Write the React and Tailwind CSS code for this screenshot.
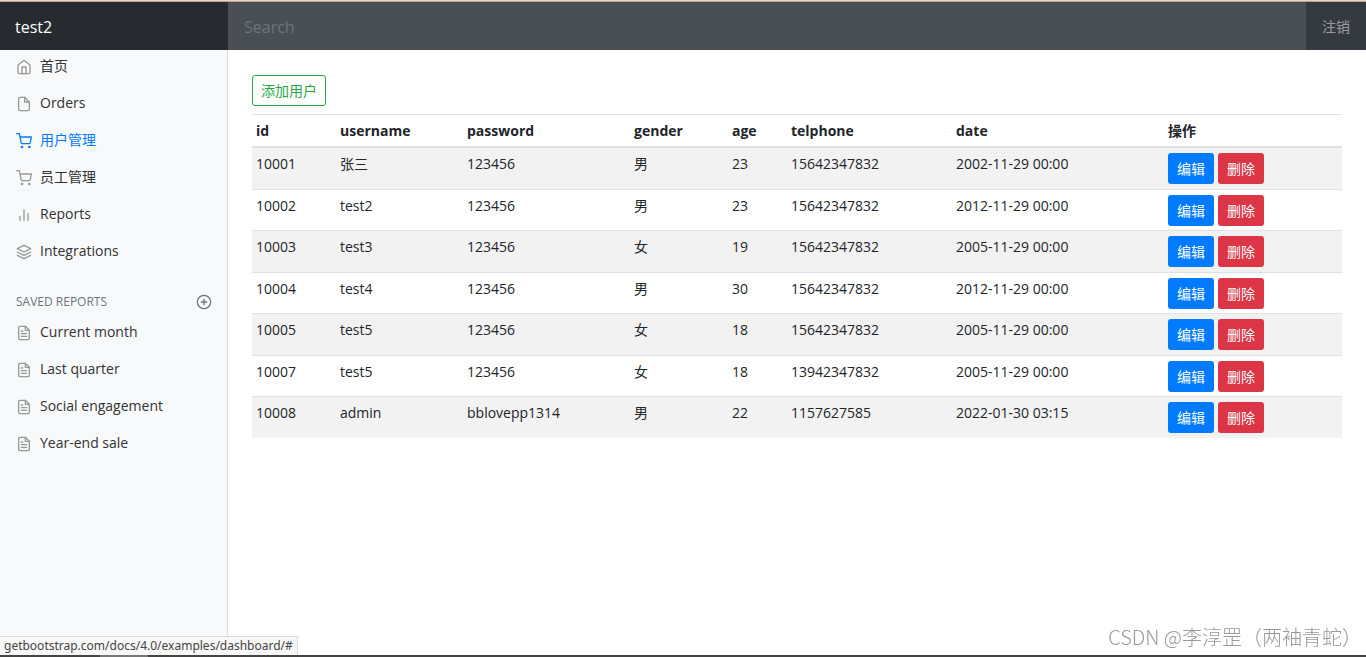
import { FiHome, FiFile, FiShoppingCart, FiBarChart2, FiLayers, FiFileText, FiPlusCircle } from 'react-icons/fi';
import clsx from 'clsx';

const navItems = [
    { label: '首页', icon: FiHome },
    { label: 'Orders', icon: FiFile },
    { label: '用户管理', icon: FiShoppingCart, active: true },
    { label: '员工管理', icon: FiShoppingCart },
    { label: 'Reports', icon: FiBarChart2 },
    { label: 'Integrations', icon: FiLayers }
];

const savedReports = ['Current month', 'Last quarter', 'Social engagement', 'Year-end sale'];

const columns = [
    { label: 'id', width: 'w-[84px]' },
    { label: 'username', width: 'w-[127px]' },
    { label: 'password', width: 'w-[167px]' },
    { label: 'gender', width: 'w-[98px]' },
    { label: 'age', width: 'w-[59px]' },
    { label: 'telphone', width: 'w-[165px]' },
    { label: 'date', width: 'w-[212px]' },
    { label: '操作', width: 'w-[178px]' }
];

const users = [
    { id: 10001, username: '张三', password: '123456', gender: '男', age: 23, telphone: '15642347832', date: '2002-11-29 00:00' },
    { id: 10002, username: 'test2', password: '123456', gender: '男', age: 23, telphone: '15642347832', date: '2012-11-29 00:00' },
    { id: 10003, username: 'test3', password: '123456', gender: '女', age: 19, telphone: '15642347832', date: '2005-11-29 00:00' },
    { id: 10004, username: 'test4', password: '123456', gender: '男', age: 30, telphone: '15642347832', date: '2012-11-29 00:00' },
    { id: 10005, username: 'test5', password: '123456', gender: '女', age: 18, telphone: '15642347832', date: '2005-11-29 00:00' },
    { id: 10007, username: 'test5', password: '123456', gender: '女', age: 18, telphone: '13942347832', date: '2005-11-29 00:00' },
    { id: 10008, username: 'admin', password: 'bblovepp1314', gender: '男', age: 22, telphone: '1157627585', date: '2022-01-30 03:15' }
];

function NavLink({ label, icon: Icon, active }) {
    return (
        <li>
            <a
                href="#"
                className={clsx(
                    'flex items-center gap-2 px-4 py-2 leading-[21px]',
                    active ? 'text-[#007bff]' : 'text-[#333]'
                )}
            >
                <Icon className={clsx('mt-0.5 size-4 shrink-0', !active && 'text-[#999]')} />
                {label}
            </a>
        </li>
    );
}

function Header() {
    return (
        <header className="z-10 flex h-12 bg-[#343a40]">
            <a href="#" className="flex w-[228px] shrink-0 items-center bg-[#272b30] px-[15px] pt-0.5 text-base text-white">
                test2
            </a>
            <input
                type="text"
                placeholder="Search"
                aria-label="Search"
                className="min-w-0 flex-1 bg-[#494f52] px-4 pt-0.5 text-base text-white outline-none placeholder:text-[#6c757d]"
            />
            <a href="#" className="flex items-center px-4 pt-0.5 text-white/50">注销</a>
        </header>
    );
}

function Sidebar() {
    return (
        <nav className="-mt-[3px] w-[228px] shrink-0 border-r border-[#dcdee0] bg-[#f8f9fb]">
            <ul>
                {navItems.map(item => <NavLink key={item.label} {...item} />)}
            </ul>
            <h6 className="mt-6 mb-0.5 flex h-[18px] items-center justify-between pr-[15px] pl-4 text-xs text-[#6c757d] uppercase">
                <span>Saved reports</span>
                <a href="#" aria-label="Add report">
                    <FiPlusCircle className="size-4" />
                </a>
            </h6>
            <ul>
                {savedReports.map(label => <NavLink key={label} label={label} icon={FiFileText} />)}
            </ul>
        </nav>
    );
}

function UserTable() {
    return (
        <table className="w-full table-fixed border-separate border-spacing-0 text-left leading-[21px]">
            <thead>
                <tr>
                    {columns.map(({ label, width }) => (
                        <th key={label} className={clsx('border-y border-[#dee2e6] px-1 py-[5px] font-bold', width)}>
                            {label}
                        </th>
                    ))}
                </tr>
            </thead>
            <tbody className="align-top">
                {users.map(user => (
                    <tr
                        key={user.id}
                        className="odd:h-[42px] odd:bg-[#f2f2f2] even:h-[41px] [&>td]:border-t [&>td]:border-[#dee2e6] [&>td]:px-1 [&>td]:pt-[5px] [&>td]:pb-1"
                    >
                        <td>{user.id}</td>
                        <td>{user.username}</td>
                        <td>{user.password}</td>
                        <td>{user.gender}</td>
                        <td>{user.age}</td>
                        <td>{user.telphone}</td>
                        <td>{user.date}</td>
                        <td>
                            <div className="flex gap-1">
                                <button type="button" className="h-[31px] rounded-[3px] bg-[#007bff] px-[9px] text-white">
                                    编辑
                                </button>
                                <button type="button" className="h-[31px] rounded-[3px] bg-[#dc3545] px-[9px] text-white">
                                    删除
                                </button>
                            </div>
                        </td>
                    </tr>
                ))}
            </tbody>
        </table>
    );
}

export default function App() {
    return (
        <div className="flex min-h-screen flex-col bg-white font-['Open_Sans','Noto_Sans_CJK_SC',sans-serif] text-sm text-[#212529]">
            <div className="h-0.5 bg-linear-to-b from-[#f7ede6] to-[#b08c80]" />
            <Header />
            <div className="flex flex-1">
                <Sidebar />
                <main className="min-w-0 flex-1 px-6 pt-[25px]">
                    <button type="button" className="mb-2 block h-[31px] rounded-[3px] border border-[#28a745] px-2 text-[#28a745]">
                        添加用户
                    </button>
                    <UserTable />
                </main>
            </div>
            <div className="flex h-0.5 bg-[#444]">
                <div className="ml-[100px] w-12 bg-[#777]" />
            </div>

            {/* link preview in the corner of the window */}
            <div className="fixed bottom-0.5 left-0 border-t border-r border-[#d9dbdd] bg-[#f8f8f8] px-1 font-['Noto_Sans',sans-serif] text-xs leading-[18px] text-[#444]">
                getbootstrap.com/docs/4.0/examples/dashboard/#
            </div>
            <div className="fixed right-1 bottom-1.5 font-['Noto_Sans_CJK_SC',sans-serif] text-xl leading-7 font-light text-[#999]">
                CSDN @李淳罡（两袖青蛇）
            </div>
        </div>
    );
}
